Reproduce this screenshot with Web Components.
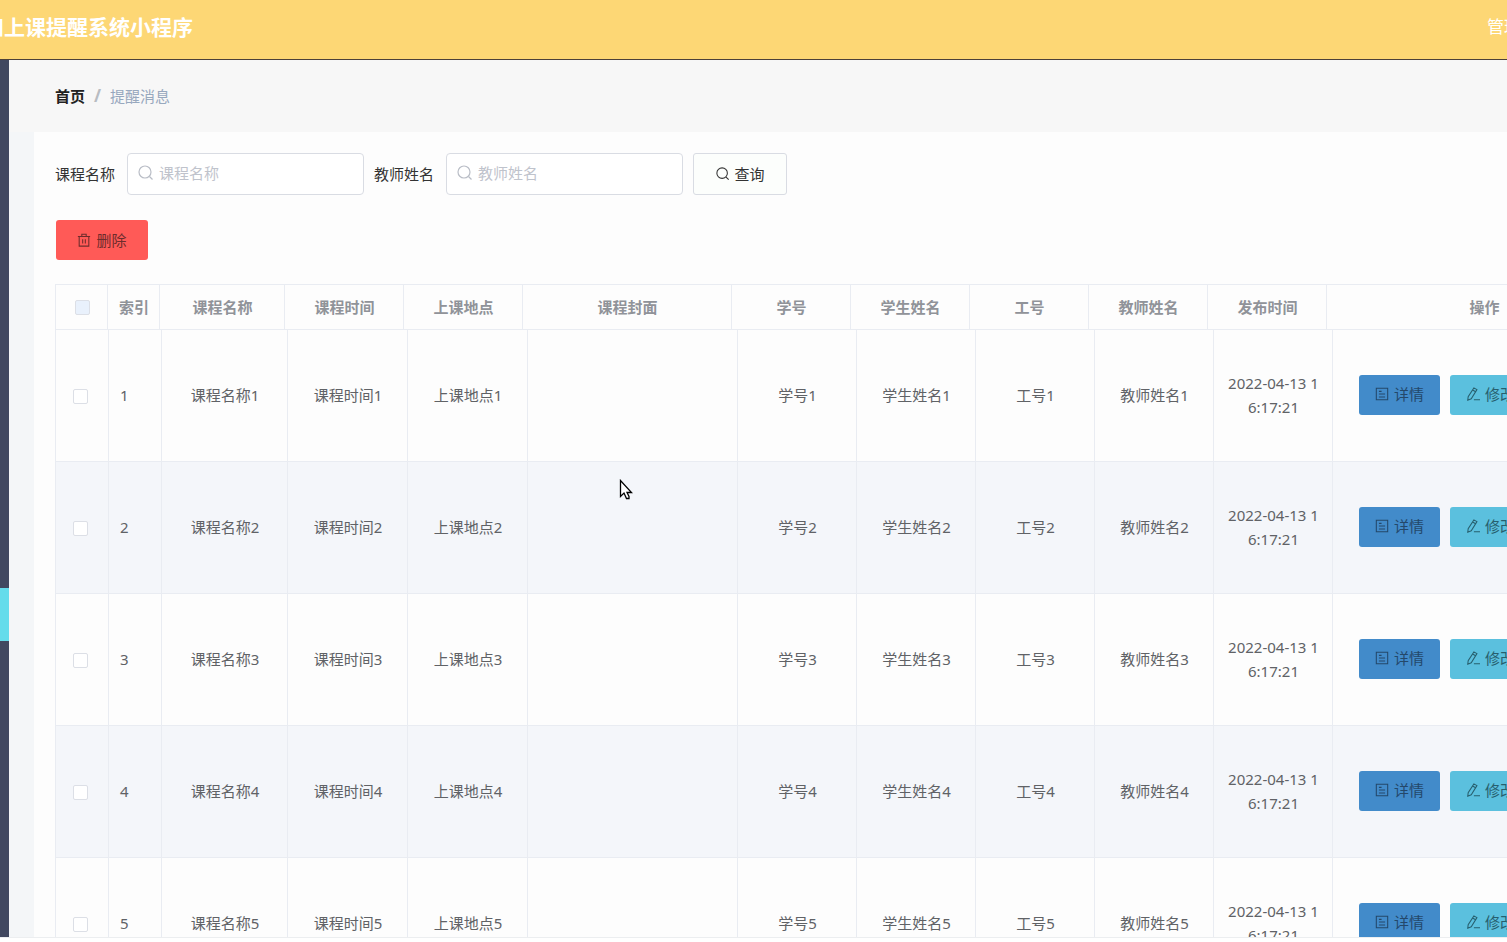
<!DOCTYPE html>
<html lang="zh-CN">
<head>
<meta charset="utf-8">
<title>上课提醒系统小程序</title>
<style>
  html, body { margin: 0; height: 100%; }
  body {
    overflow: hidden;
    background: #fff;
    color: #333;
    font: 15px/24px "Noto Sans", "Noto Sans CJK SC", sans-serif;
  }
</style>
</head>
<body>
<app-shell>
  <app-header slot="header">
    和上课提醒系统小程序
    <span slot="user">管理员</span>
  </app-header>
  <side-nav slot="nav"></side-nav>
  <bread-crumb slot="crumb" current="提醒消息">首页</bread-crumb>
  <search-form></search-form>
  <message-table></message-table>
</app-shell>
<mouse-pointer></mouse-pointer>

<script>
const ICONS = {
  search: '<circle cx="7" cy="7" r="6"/><path d="M11.5 11.5l3 3"/>',
  trash: '<path d="M1 4h14M2.5 4v11h11V4M5.5 4V1.500h5V4M6.500 7v5M9.500 7v5"/>',
  doc: '<path d="M1.500 1.500h13v13h-13zM4.500 5h3M4.500 8h7M4.500 11.500h7"/>',
  edit: '<path d="M9 1l3.500 2L6 13.500 2 15l.5-4zM7.500 3.500l3.500 2M9 14.500h7"/>'
};
const icon = (name) =>
  `<svg viewBox="0 0 16 16" aria-hidden="true" fill="none" stroke="currentColor" stroke-width="1.2">${ICONS[name]}</svg>`;

function define(name, render) {
  customElements.define(name, class extends HTMLElement {
    constructor() {
      super();
      this.attachShadow({ mode: 'open' });
    }
    connectedCallback() {
      const t = document.createElement('template');
      t.innerHTML = render(this);
      this.shadowRoot.replaceChildren(t.content.cloneNode(true));
    }
  });
}

define('app-shell', () => `
  <style>
    :host { display: flex; flex-direction: column; height: 100vh; box-sizing: border-box; padding-bottom: 4px; }
    .body { flex: 1; display: flex; min-height: 0; border-bottom: 1px solid #eceef0; }
    main { flex: 1; min-width: 0; overflow: hidden; background: #f7f7f7; }
    .page { padding-left: 25px; background: #f4f6f8; }
    .card { background: #fdfdfd; padding: 21px 0 0 21px; min-height: 100vh; }
  </style>
  <slot name="header"></slot>
  <div class="body">
    <slot name="nav"></slot>
    <main>
      <slot name="crumb"></slot>
      <div class="page"><section class="card"><slot></slot></section></div>
    </main>
  </div>`);

define('app-header', () => `
  <style>
    :host { display: block; }
    header {
      display: flex; justify-content: space-between; align-items: center;
      height: 59px; box-sizing: border-box; padding-bottom: 6px;
      background: #fdd775; color: #fff; overflow: hidden; white-space: nowrap;
    }
    .wrap { border-bottom: 1px solid #4c4038; }
    h1 { margin: 0; width: 193px; display: flex; justify-content: flex-end; font-size: 21px; line-height: 32px; }
    .user { width: 20px; font-size: 17px; }
  </style>
  <div class="wrap"><header><h1><slot></slot></h1><div class="user"><slot name="user"></slot></div></header></div>`);

define('side-nav', () => `
  <style>
    :host { display: block; width: 9px; flex: none; background: #414860; }
    nav { padding-top: 528px; }
    a { display: block; height: 53px; background: #65dceb; }
  </style>
  <nav><a href="#messages" aria-label="提醒消息" aria-current="page"></a></nav>`);

define('bread-crumb', (el) => `
  <style>
    :host { display: block; padding: 24px 0 24px 46px; }
    nav { display: flex; gap: 9px; }
    a { color: #222; font-weight: 700; text-decoration: none; }
    i { font-style: normal; font-size: 17px; font-weight: 700; color: #b8bcc2; }
    span { color: #97a8be; }
  </style>
  <nav><a href="#home"><slot></slot></a><i>/</i><span>${el.getAttribute('current')}</span></nav>`);

define('search-field', (el) => `
  <style>
    :host { display: flex; align-items: center; gap: 12px; }
    .box {
      display: flex; align-items: center; gap: 5px;
      width: 237px; height: 42px; box-sizing: border-box; padding: 0 10px 2px;
      border: 1px solid #d9dce3; border-radius: 4px; background: #fff; color: #b9bdc6;
    }
    svg { width: 16px; height: 16px; flex: none; }
    input { flex: 1; min-width: 0; border: 0; padding: 0; outline: 0; background: none; font: inherit; color: #606266; }
    input::placeholder { color: #bfc3cc; opacity: 1; }
  </style>
  <label for="q">${el.getAttribute('label')}</label>
  <div class="box">${icon('search')}<input id="q" type="text" placeholder="${el.getAttribute('label')}"></div>`);

define('tool-button', (el) => `
  <style>
    :host { display: block; }
    button {
      display: flex; align-items: center; justify-content: center; gap: 5px;
      width: 81px; height: 40px; box-sizing: border-box; padding: 0 0 1px;
      border: 0; border-radius: 3px; font: inherit; white-space: nowrap; color: #333;
    }
    svg { width: 14px; height: 14px; flex: none; }
    .query { width: 94px; height: 42px; border: 1px solid #d9dce3; background: #fcfefc; }
    .danger { width: 92px; background: #ff5a57; color: #6e2c2c; }
    .detail { background: #428bca; color: #24486a; }
    .edit { background: #5bc0de; color: #275f6e; }
  </style>
  <button type="button" class="${el.getAttribute('kind')}">${icon(el.getAttribute('icon'))}<span><slot></slot></span></button>`);

define('search-form', () => `
  <style>
    :host { display: block; }
    form { display: flex; gap: 10px; }
    .actions { display: flex; padding: 25px 1px 24px; }
  </style>
  <form>
    <search-field label="课程名称"></search-field>
    <search-field label="教师姓名"></search-field>
    <tool-button kind="query" icon="search">查询</tool-button>
  </form>
  <div class="actions"><tool-button kind="danger" icon="trash">删除</tool-button></div>`);

const HEADS = ['索引', '课程名称', '课程时间', '上课地点', '课程封面', '学号', '学生姓名', '工号', '教师姓名', '发布时间', '操作'];
const cols = (widths) => `<colgroup>${widths.map((w) => `<col style="width:${w}px">`).join('')}</colgroup>`;
const row = (n) => `
  <tr>
    <td class="pick"><input type="checkbox" aria-label="选择${n}"></td>
    <td class="index">${n}</td>
    <td>课程名称${n}</td><td>课程时间${n}</td><td>上课地点${n}</td><td></td>
    <td>学号${n}</td><td>学生姓名${n}</td><td>工号${n}</td><td>教师姓名${n}</td>
    <td>2022-04-13 16:17:21</td>
    <td><div class="ops"><tool-button kind="detail" icon="doc">详情</tool-button><tool-button kind="edit" icon="edit">修改</tool-button></div></td>
  </tr>`;

define('message-table', () => `
  <style>
    :host { display: block; overflow: hidden; border: 1px solid #e9ecf2; border-right: 0; }
    table { table-layout: fixed; width: 0; border-collapse: separate; border-spacing: 0; }
    th, td {
      box-sizing: border-box; padding: 0 9px 0 10px; text-align: center; vertical-align: middle;
      border: solid #e9ecf2; border-width: 0 1px 1px 0; word-break: break-all;
    }
    th { height: 45px; color: #909399; font-weight: 700; }
    td { height: 132px; padding-bottom: 2px; color: #606266; }
    tr:nth-child(even) td { background: #f4f6fa; }
    .index, .pick { text-align: left; }
    .pick { padding: 2px 0 0 17px; }
    .index { padding-left: 11px; }
    input {
      appearance: none; display: block; width: 15px; height: 15px; box-sizing: border-box;
      margin: 0; border: 1px solid #dcdfe6; border-radius: 2px; background: #fff;
    }
    th input { margin: 0 auto; background: #e9f1fc; }
    .ops { display: flex; gap: 10px; padding-left: 16px; }
  </style>
  <table>
    ${cols([52, 52, 125, 119, 119, 209, 119, 119, 119, 119, 119, 315])}
    <thead><tr><th><input type="checkbox" disabled aria-label="全选"></th>${HEADS.map((h) => `<th>${h}</th>`).join('')}</tr></thead>
  </table>
  <table>
    ${cols([53, 53, 126, 120, 120, 210, 119, 119, 119, 119, 119, 315])}
    <tbody>${[1, 2, 3, 4, 5].map(row).join('')}</tbody>
  </table>`);

define('mouse-pointer', () => `
  <style>
    :host { position: absolute; left: 619px; top: 479px; pointer-events: none; }
    svg { display: block; }
  </style>
  <svg width="14" height="21" viewBox="0 0 14 21" aria-hidden="true"><path d="M1.500 1.500v16l3.500-3.500 2.500 5.500h2.500v-2l-2-4h4.500z" fill="#fff" stroke="#000" stroke-width="1.3"/></svg>`);
</script>
</body>
</html>
